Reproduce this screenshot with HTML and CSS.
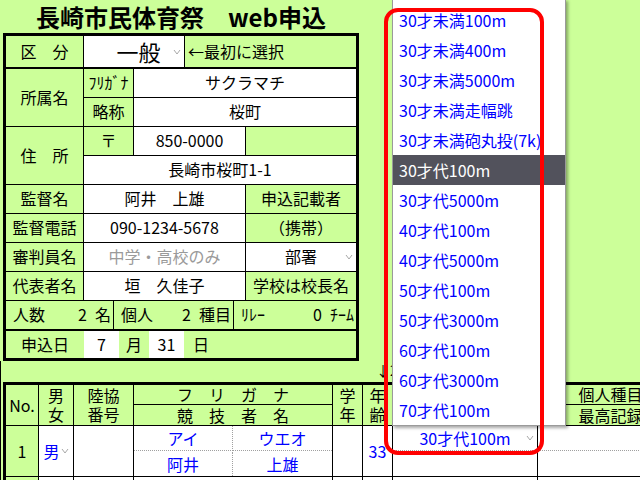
FILE: index.html
```html
<!DOCTYPE html>
<html>

<head>
    <meta charset="utf-8">
    <title>長崎市民体育祭 web申込</title>
    <link rel="stylesheet" href="styles.css">
</head>

<body>
    <h1 class="title">長崎市民体育祭　web申込</h1>

    <div class="form">
        <div class="kubun">
            <div class="cell">区　分</div>
            <div class="cell val select big">
                <span class="sel-text">一般</span>
                <svg class="chev" width="8" height="6" viewBox="0 0 8 6"><path d="M1 1 L4 5 L7 1" /></svg>
            </div>
            <div class="cell left">←最初に選択</div>
        </div>

        <div class="main">
            <div class="cell rows2">所属名</div>
            <div class="cell">ﾌﾘｶﾞﾅ</div>
            <div class="cell val cols2">サクラマチ</div>
            <div class="cell">略称</div>
            <div class="cell val cols2">桜町</div>

            <div class="cell rows2">住　所</div>
            <div class="cell">〒</div>
            <div class="cell val">850-0000</div>
            <div class="cell"></div>
            <div class="cell val cols3">長崎市桜町1-1</div>

            <div class="cell">監督名</div>
            <div class="cell val cols2">阿井　上雄</div>
            <div class="cell">申込記載者</div>

            <div class="cell">監督電話</div>
            <div class="cell val cols2">090-1234-5678</div>
            <div class="cell">（携帯）</div>

            <div class="cell">審判員名</div>
            <div class="cell val cols2 grey">中学・高校のみ</div>
            <div class="cell val select">
                <span class="sel-text">部署</span>
                <svg class="chev" width="8" height="6" viewBox="0 0 8 6"><path d="M1 1 L4 5 L7 1" /></svg>
            </div>

            <div class="cell">代表者名</div>
            <div class="cell val cols2">垣　久佳子</div>
            <div class="cell">学校は校長名</div>
        </div>

        <div class="count">
            <div class="cell"><span>人数</span><span class="num">2<span class="unit">名</span></span></div>
            <div class="cell"><span>個人</span><span class="num">2<span class="unit">種目</span></span></div>
            <div class="cell"><span>ﾘﾚｰ</span><span class="num">0<span class="unit">ﾁｰﾑ</span></span></div>
        </div>

        <div class="date">
            <div class="d-lab">申込日</div>
            <div class="d-val">7</div>
            <div class="d-unit">月</div>
            <div class="d-val">31</div>
            <div class="d-rest">日</div>
        </div>
    </div>

    <div class="lower">
        <div class="arrow-note">↓2</div>

        <div class="entries">
            <!-- header -->
            <div class="h rows2"><span>No.</span></div>
            <div class="h rows2"><span>男<br>女</span></div>
            <div class="h rows2"><span>陸協<br>番号</span></div>
            <div class="h cols2">フ　リ　ガ　ナ</div>
            <div class="h rows2"><span>学<br>年</span></div>
            <div class="h rows2"><span>年<br>齢</span></div>
            <div class="h rows2"></div>
            <div class="h">個人種目</div>
            <div class="h cols2">競　技　者　名</div>
            <div class="h">最高記録</div>

            <!-- 1 -->
            <div class="d no">1</div>
            <div class="d blue">男<svg class="chev" width="8" height="6" viewBox="0 0 8 6"><path d="M1 1 L4 5 L7 1" /></svg></div>
            <div class="d"></div>
            <div class="d cols2 names">
                <div class="nm top mid">アイ</div>
                <div class="nm top">ウエオ</div>
                <div class="nm mid">阿井</div>
                <div class="nm">上雄</div>
            </div>
            <div class="d"></div>
            <div class="d blue">33</div>
            <div class="d split">
                <div class="half top select blue">
                    <span class="sel-text">30才代100m</span>
                    <svg class="chev" width="8" height="6" viewBox="0 0 8 6"><path d="M1 1 L4 5 L7 1" /></svg>
                </div>
                <div class="half"></div>
            </div>
            <div class="d split">
                <div class="half top"></div>
                <div class="half"></div>
            </div>

            <!-- 2 -->
            <div class="d no"></div>
            <div class="d"></div>
            <div class="d"></div>
            <div class="d cols2"></div>
            <div class="d"></div>
            <div class="d"></div>
            <div class="d"></div>
            <div class="d"></div>
        </div>
    </div>

    <ul class="droplist">
        <li>30才未満100m</li>
        <li>30才未満400m</li>
        <li>30才未満5000m</li>
        <li>30才未満走幅跳</li>
        <li>30才未満砲丸投(7k)</li>
        <li class="on">30才代100m</li>
        <li>30才代5000m</li>
        <li>40才代100m</li>
        <li>40才代5000m</li>
        <li>50才代100m</li>
        <li>50才代3000m</li>
        <li>60才代100m</li>
        <li>60才代3000m</li>
        <li>70才代100m</li>
    </ul>

    <div class="mark"></div>
</body>

</html>
```

FILE: styles.css
```css
* {
    margin: 0;
    padding: 0;
    box-sizing: border-box;
}

li {
    list-style-type: none;
}

body {
    width: 640px;
    height: 480px;
    overflow: hidden;
    position: relative;
    background-color: #ccff99;
    color: #000;
    font-family: "Noto Sans CJK JP", sans-serif;
    font-size: 16px;
}

.title {
    width: 356px;
    height: 33px;
    margin-left: 3px;
    line-height: 33px;
    font-size: 24px;
    font-weight: bold;
    text-align: center;
}

/* 上の申込フォーム */
.form {
    width: 356px;
    margin-left: 3px;
    border: 3px solid #000;
    background-color: #000;
    display: flex;
    flex-direction: column;
}

.kubun {
    display: grid;
    grid-template-columns: 77px 100px 171px;
    gap: 1px;
    height: 31px;
    margin-bottom: 2px;
}

.main {
    display: grid;
    grid-template-columns: 77px 49px 111px 110px;
    grid-auto-rows: 28px;
    gap: 1px;
    margin-bottom: 1px;
}

.count {
    display: grid;
    grid-template-columns: 107px 119px 122px;
    gap: 1px;
    height: 28px;
    margin-bottom: 2px;
}

.cell {
    background-color: #ccff99;
    display: flex;
    align-items: center;
    justify-content: center;
    white-space: nowrap;
    line-height: 1.2;
}

.val {
    background-color: #fff;
}

.left {
    justify-content: flex-start;
    padding-left: 3px;
}

.grey {
    color: #9a9a9a;
}

.rows2 {
    grid-row: span 2;
}

.cols2 {
    grid-column: span 2;
}

.cols3 {
    grid-column: span 3;
}

.select {
    display: grid;
    grid-template-columns: 1fr auto 1fr;
    align-items: center;
}

.select .sel-text {
    grid-column: 2;
}

.select .chev {
    grid-column: 3;
    justify-self: end;
    margin-right: 3px;
}

.big {
    font-size: 22px;
    padding-left: 9px;
}

.chev path {
    fill: none;
    stroke: #a8a8a8;
    stroke-width: 1;
}

.count .cell {
    justify-content: space-between;
    padding: 0 2px 0 7px;
}

.count .unit {
    margin-left: 8px;
}

.date {
    display: flex;
    height: 27px;
    background-color: #ccff99;
    line-height: 27px;
}

.d-lab {
    width: 78px;
    text-align: center;
}

.d-val {
    width: 35px;
    background-color: #fff;
    text-align: center;
}

.d-unit {
    width: 30px;
    text-align: center;
}

.d-rest {
    flex: 1;
    padding-left: 9px;
}

/* 下の選手一覧 */
.lower {
    border-left: 1px solid #000;
}

.arrow-note {
    height: 21px;
    padding-left: 375px;
    font-size: 14px;
    line-height: 19px;
}

.entries {
    width: max-content;
    margin-left: 2px;
    display: grid;
    grid-template-columns: 32px 34px 59px 98px 99px 29px 29px 144px 145px;
    grid-template-rows: 19px 20px 50px 40px;
    gap: 1px;
    background-color: #000;
    border-top: 3px solid #000;
    border-left: 3px solid #000;
}

.h {
    background-color: #ccff99;
    display: flex;
    align-items: center;
    justify-content: center;
    text-align: center;
    white-space: nowrap;
    line-height: 19px;
}

.d {
    background-color: #fff;
    display: flex;
    align-items: center;
    justify-content: center;
    white-space: nowrap;
}

.d .chev {
    margin-left: 1px;
}

.no {
    background-color: #ccff99;
}

.blue {
    color: #0000ff;
}

.names {
    display: grid;
    grid-template-columns: 99px 99px;
    grid-template-rows: 25px 25px;
    color: #0000ff;
}

.nm {
    display: flex;
    align-items: center;
    justify-content: center;
}

.nm.top {
    border-bottom: 1px dotted #a0a0a0;
}

.nm.mid {
    border-right: 1px dotted #a0a0a0;
}

.split {
    flex-direction: column;
    align-items: stretch;
}

.half {
    height: 25px;
}

.half.top {
    border-bottom: 1px dotted #a0a0a0;
}

/* 開いている種目リスト */
.droplist {
    position: absolute;
    left: 392px;
    top: -1px;
    width: 174px;
    padding-top: 5px;
    background-color: #fff;
    border: 1px solid #9a9a9a;
    box-shadow: 2px 2px 3px rgba(0, 0, 0, 0.35);
}

.droplist li {
    height: 30px;
    line-height: 30px;
    padding-left: 6px;
    color: #0000ff;
    white-space: nowrap;
}

.droplist li.on {
    background-color: #52525c;
    color: #fff;
}

.mark {
    position: absolute;
    left: 384px;
    top: 8px;
    width: 160px;
    height: 447px;
    border: 4px solid #ff0000;
    border-radius: 14px;
}
```
